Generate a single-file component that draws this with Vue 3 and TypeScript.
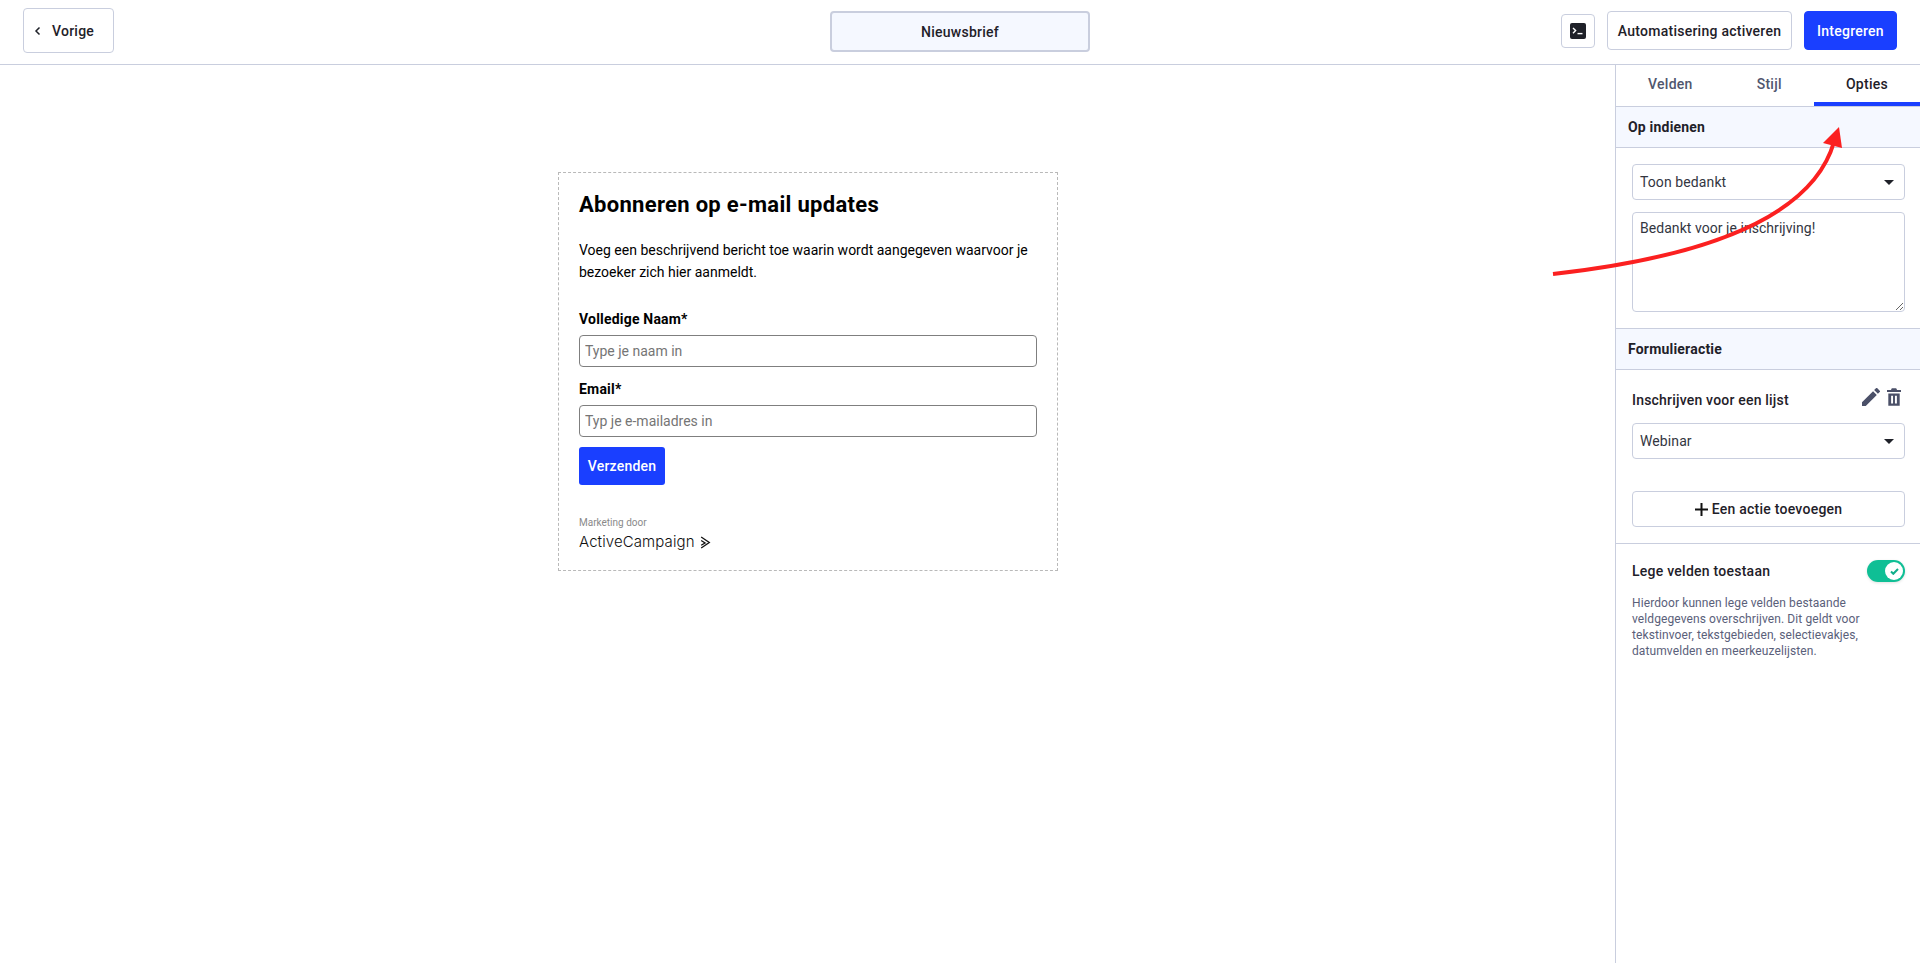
<template>
  <div class="page">
    <header class="topbar">
      <div class="topbar-left">
        <button class="btn back" type="button">
          <svg width="8" height="10" viewBox="0 0 8 10"><path d="M5.5 1.5 2 5l3.5 3.5" fill="none" stroke="#1f2129" stroke-width="1.5" /></svg>
          <span>Vorige</span>
        </button>
      </div>
      <div class="form-name">Nieuwsbrief</div>
      <div class="topbar-right">
        <button class="btn term" type="button">
          <svg width="16" height="16" viewBox="0 0 16 16">
            <rect width="16" height="16" rx="2" fill="#1f2129" />
            <path d="M3 5l2.6 2.6L3 10.2" fill="none" stroke="#fff" stroke-width="1.4" />
            <path d="M7.5 10.6h5" stroke="#fff" stroke-width="1.4" />
          </svg>
        </button>
        <button class="btn action" type="button">Automatisering activeren</button>
        <button class="btn primary" type="button">Integreren</button>
      </div>
    </header>

    <div class="body">
      <main class="canvas">
        <div class="form-card">
          <h1>Abonneren op e-mail updates</h1>
          <p class="intro">Voeg een beschrijvend bericht toe waarin wordt aangegeven waarvoor je bezoeker zich hier aanmeldt.</p>
          <label class="field-label first">Volledige Naam*</label>
          <input class="field" type="text" placeholder="Type je naam in" />
          <label class="field-label second">Email*</label>
          <input class="field" type="text" placeholder="Typ je e-mailadres in" />
          <button class="submit" type="button">Verzenden</button>
          <div class="credit">Marketing door</div>
          <div class="logo">
            <span>ActiveCampaign</span>
            <svg width="11" height="13" viewBox="0 0 10 12"><path d="M1 1l7.5 5L1 11M1 4.2 4.600 6.400 1 8.600" fill="none" stroke="#111" stroke-width="1.200" /></svg>
          </div>
        </div>
      </main>

      <aside class="sidebar">
        <nav class="tabs">
          <a v-for="tab in tabs" :key="tab" class="tab" :class="{ active: tab === activeTab }">{{ tab }}</a>
        </nav>

        <div class="section-head">Op indienen</div>
        <div class="section thanks">
          <div class="select"><span>Toon bedankt</span><i class="caret"></i></div>
          <textarea class="message" v-model="thanks"></textarea>
        </div>

        <div class="section-head bordered">Formulieractie</div>
        <div class="section actions">
          <div class="action-row">
            <span>Inschrijven voor een lijst</span>
            <span class="action-icons">
              <svg width="18" height="18" viewBox="3 3 18 18"><path fill="#4b5068" d="M3 17.250V21h3.750L17.810 9.940l-3.750-3.750L3 17.250zM20.710 7.040a1 1 0 0 0 0-1.410l-2.340-2.340a1 1 0 0 0-1.410 0l-1.830 1.830 3.750 3.750 1.830-1.830z" /></svg>
              <svg width="14" height="18" viewBox="4 2 16 20"><path fill="#4b5068" fill-rule="evenodd" d="M9.500 2h5l1 2H20v2.400H4V4h4.500l1-2zM5.500 8h13v14h-13V8zm3.200 2.600v8.800h2.200v-8.800H8.700zm4.400 0v8.800h2.200v-8.800h-2.200z" /></svg>
            </span>
          </div>
          <div class="select"><span>Webinar</span><i class="caret"></i></div>
          <button class="add-action" type="button">
            <svg width="13" height="13" viewBox="0 0 13 13"><path d="M6.500 0v13M0 6.500h13" stroke="#111" stroke-width="2" /></svg>
            <span>Een actie toevoegen</span>
          </button>
        </div>

        <div class="section overwrite">
          <div class="toggle-row">
            <span>Lege velden toestaan</span>
            <span class="toggle">
              <span class="knob">
                <svg width="9" height="7" viewBox="0 0 9 7"><path d="M1 3.500l2.300 2.300L8 1" fill="none" stroke="#0fae8a" stroke-width="2" /></svg>
              </span>
            </span>
          </div>
          <p class="hint">Hierdoor kunnen lege velden bestaande veldgegevens overschrijven. Dit geldt voor tekstinvoer, tekstgebieden, selectievakjes, datumvelden en meerkeuzelijsten.</p>
        </div>
      </aside>
    </div>

    <!-- annotation drawn over the screenshot -->
    <svg class="arrow" width="1920" height="963" viewBox="0 0 1920 963">
      <path d="M1553 274C1660 262 1808 232 1834 142" fill="none" stroke="#fb2020" stroke-width="4" />
      <path d="M1839 127 1823 143 1842 148z" fill="#fb2020" />
    </svg>
  </div>
</template>

<script setup lang="ts">
import { ref } from 'vue';

const tabs: string[] = ['Velden', 'Stijl', 'Opties'];
const activeTab = ref('Opties');
const thanks = ref('Bedankt voor je inschrijving!');
</script>

<style>
html, body {
  margin: 0;
  background: #fff;
}
</style>

<style scoped>
.page {
  position: relative;
  display: flex;
  flex-direction: column;
  height: 963px;
  overflow: hidden;
  font-family: Roboto, "Noto Sans", sans-serif;
  color: #1f2129;
  font-size: 14px;
}

/* Top bar */
.topbar {
  display: grid;
  grid-template-columns: 1fr 260px 1fr;
  align-items: center;
  height: 61px;
  padding-bottom: 3px;
  flex: none;
  border-bottom: 1px solid #c9cede;
  box-sizing: content-box;
}

.topbar-left {
  padding-left: 23px;
}

.topbar-right {
  display: flex;
  justify-content: flex-end;
  align-items: center;
  gap: 12px;
  padding-right: 23px;
}

.btn {
  font: inherit;
  font-weight: 500;
  color: #1f2129;
  background: #fff;
  border: 1px solid #c9cede;
  border-radius: 4px;
  box-sizing: border-box;
  letter-spacing: 0.25px;
}

.back {
  display: flex;
  align-items: center;
  gap: 10px;
  width: 91px;
  height: 45px;
  padding: 0 0 0 10px;
}

.form-name {
  display: flex;
  align-items: center;
  justify-content: center;
  height: 41px;
  margin-top: 2px;
  box-sizing: border-box;
  background: #f5f8ff;
  border: 2px solid #c9cede;
  border-radius: 4px;
  font-weight: 500;
  letter-spacing: 0.25px;
}

.term {
  display: flex;
  align-items: center;
  justify-content: center;
  width: 34px;
  height: 34px;
  padding: 0;
}

.action {
  width: 185px;
  height: 39px;
  padding: 0;
}

.primary {
  width: 93px;
  height: 39px;
  padding: 0;
  color: #fff;
  background: #1a3fff;
  border-color: #1a3fff;
}

/* Canvas */
.body {
  display: flex;
  flex: 1;
  min-height: 0;
}

.canvas {
  flex: 1;
  display: flex;
  justify-content: center;
  align-items: flex-start;
  padding-top: 107px;
  padding-left: 1px;
}

.form-card {
  width: 500px;
  height: 399px;
  box-sizing: border-box;
  padding: 19px 20px 0;
  border: 1px dashed #b9b9b9;
  color: #000;
}

.form-card h1 {
  margin: 0;
  font-size: 22px;
  line-height: 26px;
  font-weight: 700;
  letter-spacing: 0.3px;
}

.intro {
  margin: 21px 0 0;
  line-height: 22px;
}

.field-label {
  display: block;
  font-weight: 700;
  line-height: 18px;
  letter-spacing: 0.2px;
}

.field-label.first {
  margin-top: 27px;
}

.field-label.second {
  margin-top: 13px;
}

.field {
  display: block;
  width: 458px;
  height: 32px;
  margin-top: 7px;
  padding: 0 5px;
  box-sizing: border-box;
  font: inherit;
  border: 1px solid #7f7f7f;
  border-radius: 4px;
}

.field::placeholder {
  color: #757575;
  opacity: 1;
}

.submit {
  display: block;
  width: 86px;
  height: 38px;
  margin-top: 10px;
  padding: 0;
  font: inherit;
  font-weight: 500;
  color: #fff;
  background: #1a3fff;
  border: 0;
  border-radius: 3px;
  letter-spacing: 0.2px;
}

.credit {
  margin-top: 32px;
  font-size: 10px;
  line-height: 12px;
  color: #8a8a8a;
}

.logo {
  display: flex;
  align-items: center;
  gap: 5px;
  margin-top: 4px;
  font-family: Inter, sans-serif;
  font-weight: 300;
  font-size: 15px;
  line-height: 18px;
  color: #111;
  letter-spacing: 0.1px;
}

/* Sidebar */
.sidebar {
  width: 305px;
  flex: none;
  box-sizing: border-box;
  border-left: 1px solid #c9cede;
}

.tabs {
  display: flex;
  height: 42px;
  box-sizing: border-box;
  border-bottom: 1px solid #c9cede;
}

.tab {
  flex: 1 1 auto;
  text-align: center;
  padding-top: 11px;
  box-sizing: border-box;
  font-weight: 500;
  color: #50566e;
  letter-spacing: 0.25px;
}

.tab.active {
  color: #1f2129;
  border-bottom: 4px solid #1a3fff;
}

.section-head {
  display: flex;
  align-items: center;
  height: 41px;
  padding-left: 12px;
  box-sizing: border-box;
  background: #f5f8ff;
  border-bottom: 1px solid #c9cede;
  font-weight: 700;
  font-size: 14px;
  letter-spacing: 0.2px;
}

.section-head.bordered {
  height: 42px;
  border-top: 1px solid #c9cede;
}

.section {
  padding: 16px 15px 16px 16px;
}

.select {
  display: flex;
  align-items: center;
  justify-content: space-between;
  height: 36px;
  box-sizing: border-box;
  padding: 0 10px 0 7px;
  border: 1px solid #c9cede;
  border-radius: 4px;
  color: #33363f;
  letter-spacing: 0.1px;
}

.caret {
  width: 0;
  height: 0;
  border-left: 5px solid transparent;
  border-right: 5px solid transparent;
  border-top: 5px solid #1f2129;
}

.message {
  display: block;
  width: 100%;
  height: 100px;
  margin-top: 12px;
  padding: 7px;
  box-sizing: border-box;
  font: inherit;
  color: #33363f;
  letter-spacing: 0.05px;
  border: 1px solid #c9cede;
  border-radius: 4px;
}

.action-row {
  display: flex;
  justify-content: space-between;
  align-items: center;
  height: 28px;
  margin-bottom: 9px;
  font-weight: 500;
  letter-spacing: 0.2px;
}

.action-icons {
  display: flex;
  gap: 7px;
  margin-top: -6px;
  margin-right: 4px;
}

.add-action {
  display: flex;
  align-items: center;
  justify-content: center;
  gap: 4px;
  width: 100%;
  height: 36px;
  margin-top: 32px;
  padding: 0;
  font: inherit;
  font-weight: 500;
  color: #1f2129;
  background: #fff;
  border: 1px solid #c9cede;
  border-radius: 4px;
  letter-spacing: 0.25px;
}

.overwrite {
  border-top: 1px solid #c9cede;
}

.toggle-row {
  display: flex;
  justify-content: space-between;
  align-items: center;
  height: 22px;
  font-weight: 500;
  letter-spacing: 0.25px;
}

.toggle {
  display: flex;
  align-items: center;
  justify-content: flex-end;
  width: 38px;
  height: 22px;
  padding-right: 2px;
  box-sizing: border-box;
  background: #0fbf95;
  border-radius: 11px;
  box-shadow: 0 1px 3px rgba(0, 0, 0, 0.12);
}

.knob {
  display: flex;
  align-items: center;
  justify-content: center;
  width: 18px;
  height: 18px;
  background: #fff;
  border-radius: 50%;
}

.hint {
  margin: 13px 0 0;
  font-size: 12px;
  line-height: 16px;
  color: #5a607a;
  letter-spacing: 0.1px;
}

.arrow {
  position: absolute;
  inset: 0;
  pointer-events: none;
}
</style>
